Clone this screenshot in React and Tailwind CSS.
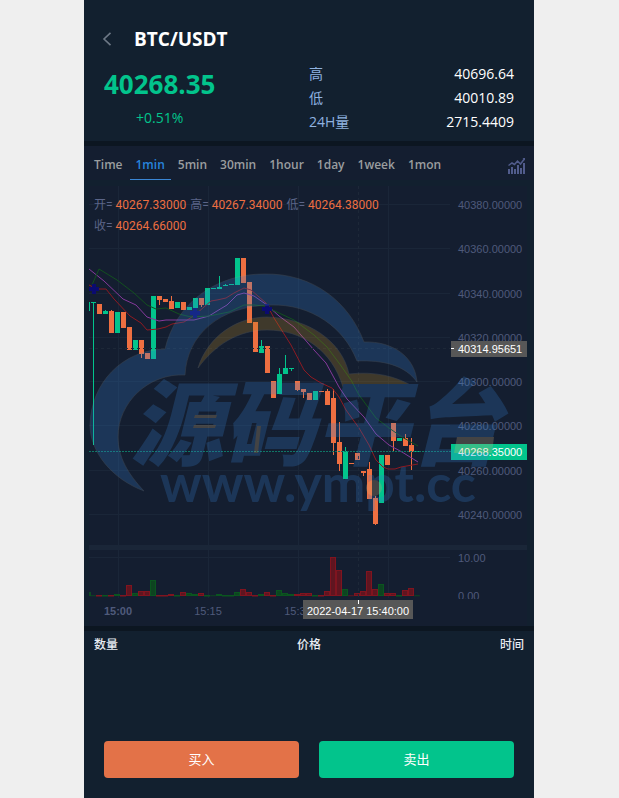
import * as React from "react";
import { clsx } from "clsx";

const UP = "#02c48c";
const DOWN = "#ee6f41";

// x centre of the first full candle, and the distance between two candles
const FIRST_X = 93;
const STEP = 6;

// [direction, body top, body bottom, wick top, wick bottom, volume]
const candles = [
  ["up", 302, 303, 302, 445, 0],
  ["down", 304, 314, 304, 314, 1],
  ["up", 311, 314, 310, 314, 1],
  ["down", 311, 333, 310, 333, 1],
  ["up", 312, 333, 312, 333, 2],
  ["down", 312, 328, 312, 328, 1],
  ["down", 327, 350, 327, 350, 11],
  ["up", 340, 350, 340, 350, 3],
  ["down", 340, 354, 340, 358, 5],
  ["down", 353, 359, 353, 359, 5],
  ["up", 296, 359, 296, 359, 16],
  ["down", 296, 300, 296, 305, 1],
  ["down", 299, 302, 299, 302, 1],
  ["down", 301, 309, 296, 309, 2],
  ["up", 302, 308, 302, 308, 1],
  ["down", 302, 310, 302, 310, 4],
  ["up", 307, 310, 307, 310, 3],
  ["up", 298, 308, 298, 308, 2],
  ["down", 298, 305, 298, 307, 3],
  ["up", 288, 305, 288, 305, 1],
  ["up", 288, 289, 288, 289, 0],
  ["up", 287, 289, 276, 289, 2],
  ["up", 285, 286, 284, 286, 1],
  ["up", 284, 285, 284, 285, 1],
  ["up", 258, 285, 258, 285, 4],
  ["down", 258, 283, 258, 283, 7],
  ["down", 282, 323, 282, 323, 4],
  ["down", 322, 352, 322, 352, 1],
  ["up", 346, 353, 340, 353, 2],
  ["down", 346, 373, 346, 373, 4],
  ["down", 381, 398, 381, 398, 1],
  ["up", 374, 394, 368, 394, 6],
  ["up", 368, 374, 355, 374, 3],
  ["up", 368, 369, 368, 371, 2],
  ["down", 381, 390, 381, 391, 2],
  ["down", 389, 392, 389, 398, 3],
  ["down", 393, 400, 393, 400, 3],
  ["up", 391, 400, 391, 400, 1],
  ["down", 391, 392, 391, 392, 1],
  ["down", 391, 405, 389, 405, 5],
  ["down", 398, 443, 389, 455, 39],
  ["down", 442, 464, 422, 471, 26],
  ["up", 451, 479, 447, 479, 7],
  ["down", 463, 464, 463, 464, 0],
  ["down", 453, 460, 453, 460, 3],
  ["down", 471, 473, 471, 476, 5],
  ["down", 469, 499, 462, 499, 25],
  ["down", 498, 524, 496, 525, 7],
  ["up", 455, 503, 455, 503, 12],
  ["down", 455, 465, 455, 465, 3],
  ["down", 423, 441, 423, 451, 3],
  ["up", 438, 441, 438, 441, 1],
  ["down", 438, 446, 434, 446, 6],
  ["down", 445, 452, 438, 470, 8],
  ["up", 451, 452, 451, 452, 0],
];

const averages = [
  {
    color: "#8e1a22",
    points:
      "89,285 97,289 106,289 114,299 130,316 141,323 147,330 158,329 166,327 172,324 184,322 195,315 204,307 211,301 217,300 226,298 234,293 244,288 251,290 266,303 274,318 291,345 304,370 311,377 321,383 332,388 339,397 346,410 359,428 369,445 376,460 383,467 388,469 395,469 401,467 418,464",
  },
  {
    color: "#85399b",
    points:
      "89,269 104,281 123,299 136,305 147,317 159,321 166,320 194,320 209,316 217,311 227,305 237,295 244,293 254,296 267,305 279,316 294,327 314,350 326,363 339,387 347,399 364,417 376,434 389,445 402,452 418,462",
  },
  {
    color: "#12501f",
    points:
      "92,285 99,269 117,280 134,293 147,305 156,309 166,308 179,314 191,317 209,316 229,312 244,305 254,305 264,306 279,313 294,320 314,335 327,347 339,363 351,380 359,395 376,418 389,428 402,437 418,446",
  },
];

const priceTicks = [
  ["40380.00000", 205],
  ["40360.00000", 249],
  ["40340.00000", 294],
  ["40320.00000", 338],
  ["40300.00000", 382],
  ["40280.00000", 426],
  ["40260.00000", 471],
  ["40240.00000", 515],
];

const timeTicks = [
  ["15:00", 118],
  ["15:15", 208],
  ["15:30", 298],
  ["", 388],
];

const markers = [
  [94, 289],
  [195, 313],
  [267, 309],
];

const BackIcon = () => (
  <svg viewBox="0 0 10 14" className="h-3.5 w-2.5" fill="none" stroke="#6d7886" strokeWidth="1.6">
    <path d="M8.5 0.8 2 7l6.500 6.200" />
  </svg>
);

const IndicatorIcon = () => (
  <svg viewBox="0 0 18 16" className="h-4 w-[18px]" fill="#515c8c">
    <path d="M0 11h2v5H0zM3 9h2v7H3zM6 11h2v5H6zM9 7h2v9H9zM12 10h2v6h-2zM15 5h2v11h-2z" />
    <path d="M0.500 7.500 4 5l2.500 1.500L9.500 3l3 3L16.500 0.700" fill="none" stroke="#515c8c" strokeWidth="1.5" />
    <path d="M14.500 0H17v2.500z" />
  </svg>
);

// Site mark laid over the candles: cloud, sun arc and name
const Watermark = () => (
  <g opacity="0.25" pointerEvents="none">
    <g stroke="#a0a3a0" strokeWidth="1" strokeLinejoin="round" strokeOpacity="0.6">
      <path
        fill="#3580cf"
        d="M144 491C112 479 90 452 90 425C91 383 122 350 165 349C176 303 216 274 264 274C313 273 349 302 364 342C393 341 415 357 417 382C405 365 383 360 357 361C344 327 311 304 271 305C219 306 187 335 185 375C149 373 118 402 118 437C118 457 128 474 144 491Z"
      />
      <path
        fill="#c08a20"
        d="M198 368C208 336 237 317 267 317C308 318 342 341 349 374C374 371 396 376 414 387C391 384 366 385 343 387C332 350 302 330 267 330C238 330 215 345 198 368Z"
      />
    </g>
    <g fill="#3580cf">
      <text
        x="130"
        y="458"
        fontSize="93"
        fontWeight="900"
        fontStyle="italic"
        fontFamily="'Noto Sans CJK SC', sans-serif"
      >
        源码平台
      </text>
      <text x="160" y="502" fontSize="52" fontWeight="700" fontFamily="Lato, sans-serif">
        www.ympt.cc
      </text>
    </g>
    <g fill="#d0b080">
      <path d="M195 415h22l-1 3h-22zM194 425h22l-1 3h-22zM257 426h4l-3 27h-4zM457 437h37l-2 16h-38z" />
      <circle cx="374" cy="488" r="8" />
    </g>
  </g>
);

const Chart = () => (
  <svg
    viewBox="84 186 450 440"
    className="block w-full"
    role="img"
    aria-label="BTC/USDT 1min"
    fontFamily="'Liberation Sans', Arial, sans-serif"
    fontSize="11"
  >
    <rect x="89" y="186" width="438" height="440" fill="#141e30" />

    {/* Grid */}
    <g fill="#1a2638">
      {timeTicks.map(([label, x]) => (
        <rect key={x} x={x} y="186" width="1" height="412" />
      ))}
      {priceTicks.map(([label, y]) => (
        <rect key={y} x="89" y={y - 1} width="361" height="1" />
      ))}
      <rect x="89" y="557" width="361" height="1" />
      <rect x="89" y="545" width="438" height="5" />
    </g>

    {/* Volume */}
    <rect x="89" y="592" width="2" height="4" fill="#0d4a22" />
    {candles.map(([dir, , , , , volume], i) => (
      <rect
        key={i}
        x={FIRST_X - 3 + i * STEP + 0.5}
        y={596 - Math.max(volume, 1) + 0.5}
        width="5"
        height={Math.max(volume - 1, 0.5)}
        fill={dir === "up" ? "#0d4420" : "#5f1520"}
        stroke={dir === "up" ? "#0a551f" : "#80141f"}
        strokeOpacity={volume ? 1 : 0.3}
      />
    ))}

    {/* Candles */}
    <g shapeRendering="crispEdges">
      <rect x="89" y="302" width="1" height="9" fill={UP} />
      {candles.map(([dir, top, bottom, high, low], i) => {
        const x = FIRST_X + i * STEP;
        return (
          <g key={i} fill={dir === "up" ? UP : DOWN}>
            <rect x={x} y={high} width="1" height={low - high} />
            <rect x={x - 2} y={top} width="5" height={bottom - top} />
          </g>
        );
      })}
    </g>

    {averages.map(({ color, points }) => (
      <polyline key={color} points={points} fill="none" stroke={color} strokeWidth="1" />
    ))}

    {markers.map(([x, y]) => (
      <path key={x} d={`M${x - 5} ${y}h10M${x} ${y - 5}v10`} stroke="#0b0b70" strokeWidth="4" />
    ))}

    {/* Crosshair and last price */}
    <path d="M358.500 186V600M89 348.500H450" stroke="#1d2838" strokeDasharray="3 3" />
    <path d="M89 451.500H451" stroke="#0f7566" strokeDasharray="2 1" />

    {/* Axis labels */}
    <g fill="#4f5a7b">
      {priceTicks.map(([label, y]) => (
        <text key={label} x="458" y={y + 4}>
          {label}
        </text>
      ))}
      <text x="458" y="562">
        10.00
      </text>
      <svg x="450" y="586" width="60" height="13" viewBox="450 586 60 13">
        <text x="458" y="600">
          0.00
        </text>
      </svg>
      {timeTicks.map(([label, x], i) => (
        <text key={x} x={x} y="615" textAnchor="middle" fontWeight={i === 0 ? 700 : 400}>
          {label}
        </text>
      ))}
    </g>

    <g fill="#ffffff">
      <rect x="451" y="341" width="76" height="16" fill="#575757" />
      <text x="458" y="353">
        40314.95651
      </text>
      <rect x="451" y="444" width="76" height="16" fill={UP} />
      <text x="458" y="456">
        40268.35000
      </text>
      <rect x="303" y="600" width="110" height="19" fill="#575757" />
      <rect x="358" y="600" width="1" height="4" />
      <rect x="451" y="348" width="3" height="1" />
      <text x="358" y="615" textAnchor="middle">
        2022-04-17 15:40:00
      </text>
    </g>

    <Watermark />
  </svg>
);

const Quote = ({ label, value }) => (
  <div className="flex gap-[3px]">
    <dt className="text-[#5b6588]">{label}=</dt>
    <dd className="text-[#ee6f41]">{value}</dd>
  </div>
);

const Stat = ({ label, value }) => (
  <div className="flex h-6 items-center justify-between">
    <dt className="text-[#8fb2e0]">{label}</dt>
    <dd className="text-white">{value}</dd>
  </div>
);

const intervals = ["Time", "1min", "5min", "30min", "1hour", "1day", "1week", "1mon"];

export default function App() {
  const [active, setActive] = React.useState("1min");

  return (
    <div className="min-h-screen bg-[#efefef] pr-px font-['Open_Sans','Noto_Sans_CJK_SC',sans-serif]">
      <main className="mx-auto flex min-h-screen max-w-[450px] flex-col bg-[#12202f]">
        <header className="border-b-5 border-[#0c1621] px-5 pt-4 pb-[7px]">
          <div className="flex h-[46px] items-center gap-[22px]">
            <button type="button" aria-label="返回" className="-ml-0.5">
              <BackIcon />
            </button>
            <h1 className="text-[19px] font-bold text-white">BTC/USDT</h1>
          </div>
          <div className="flex justify-between">
            <div className="text-center text-[#02c48c]">
              <p className="text-[26px] leading-[44px] font-bold">40268.35</p>
              <p className="text-sm leading-6">+0.51%</p>
            </div>
            <dl className="w-1/2 text-sm">
              <Stat label="高" value="40696.64" />
              <Stat label="低" value="40010.89" />
              <Stat label="24H量" value="2715.4409" />
            </dl>
          </div>
        </header>

        <nav className="mb-1.5 flex h-[34px] items-stretch bg-[#141e30] pr-2 pl-1">
          {intervals.map((name) => (
            <button
              key={name}
              type="button"
              onClick={() => setActive(name)}
              className={clsx(
                "mr-px border-b px-1.5 pt-1 text-xs font-semibold",
                active === name ? "border-[#3a86d4] text-[#2784dc]" : "border-transparent text-[#9a9d9f]",
              )}
            >
              {name}
            </button>
          ))}
          <button type="button" aria-label="指标" className="ml-auto pt-1.5">
            <IndicatorIcon />
          </button>
        </nav>

        <section className="relative">
          <Chart />
          <dl className="absolute top-[9px] right-24 left-2.5 flex flex-wrap gap-x-1 font-[Roboto,'Noto_Sans_CJK_SC',sans-serif] text-xs leading-[21px]">
            <Quote label="开" value="40267.33000" />
            <Quote label="高" value="40267.34000" />
            <Quote label="低" value="40264.38000" />
            <Quote label="收" value="40264.66000" />
          </dl>
        </section>

        <table className="w-full table-fixed border-t-5 border-[#0c1621] text-xs leading-7 text-[#e8ecf2]">
          <thead>
            <tr>
              <th className="pl-2.5 text-left font-medium">数量</th>
              <th className="text-center font-medium">价格</th>
              <th className="pr-2.5 text-right font-medium">时间</th>
            </tr>
          </thead>
        </table>

        <footer className="mt-auto grid grid-cols-2 gap-5 p-5 text-[13px] text-white">
          <button type="button" className="h-[37px] rounded bg-[#e37248]">
            买入
          </button>
          <button type="button" className="h-[37px] rounded bg-[#02c48c]">
            卖出
          </button>
        </footer>
      </main>
    </div>
  );
}
